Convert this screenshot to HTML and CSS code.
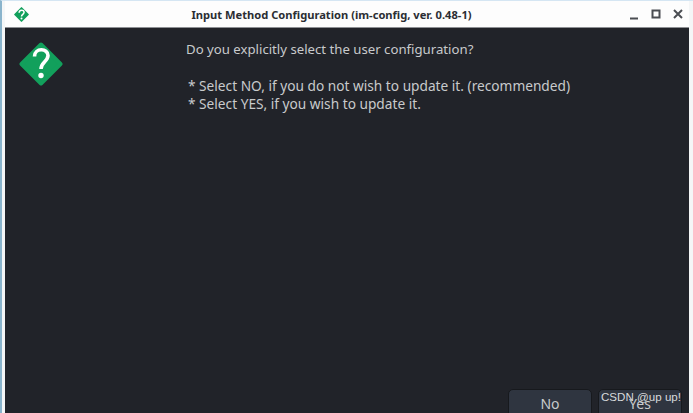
FILE: index.html

```html
<!DOCTYPE html>
<html lang="en">
<head>
  <meta charset="UTF-8">
  <meta name="viewport" content="width=device-width, initial-scale=1.0">
  <title>Input Method Configuration</title>
  <link rel="stylesheet" href="styles.css">
</head>
<body>
  <div class="window">
    <div class="titlebar">
      <svg class="title-icon" width="15" height="15" viewBox="0 0 44 44">
        <path d="M22 3 L41 22 L22 41 L3 22 Z" fill="#12a05c" stroke="#12a05c" stroke-width="5" stroke-linejoin="round"/>
        <path d="M15 17 C15 7 29.5 7.5 29.5 15.5 C29.5 21.5 22 21.5 22 28" fill="none" stroke="#fff" stroke-width="4.5"/>
        <circle cx="22" cy="34" r="3" fill="#fff"/>
      </svg>
      <div class="title">Input Method Configuration (im-config, ver. 0.48-1)</div>
      <div class="controls">
        <svg width="12" height="12" viewBox="0 0 12 12"><path d="M2 10.5 H10" stroke="#4a4d52" stroke-width="2"/></svg>
        <svg width="12" height="12" viewBox="0 0 12 12"><rect x="2.5" y="2.5" width="7" height="7" fill="none" stroke="#4a4d52" stroke-width="2"/></svg>
        <svg width="12" height="12" viewBox="0 0 12 12"><path d="M2 2 L10 10 M10 2 L2 10" stroke="#4a4d52" stroke-width="2"/></svg>
      </div>
    </div>
    <div class="dialog">
      <div class="content">
        <svg class="big-icon" width="44" height="44" viewBox="0 0 44 44">
          <path d="M22 2.5 L41.5 22 L22 41.5 L2.5 22 Z" fill="#12a05c" stroke="#12a05c" stroke-width="4" stroke-linejoin="round"/>
          <path d="M15.5 14.5 C15.5 5.5 29 6 29 13.5 C29 19.5 22 20 22 27" fill="none" stroke="#fff" stroke-width="3.6"/>
          <circle cx="22" cy="33.5" r="2.7" fill="#fff"/>
        </svg>
        <div class="message">
          <p class="question">Do you explicitly select the user configuration?</p>
          <p>* Select NO, if you do not wish to update it. (recommended)</p>
          <p>* Select YES, if you wish to update it.</p>
        </div>
      </div>
      <div class="buttons">
        <button class="btn">No</button>
        <button class="btn">Yes</button>
      </div>
    </div>
  </div>
  <div class="watermark">CSDN @up up!</div>
</body>
</html>
```

FILE: styles.css

```css
html, body {
  height: 100%;
}
body {
  margin: 0;
  overflow: hidden;
  background: #f4f6f7;
  font-family: "Noto Sans", sans-serif;
  position: relative;
}
.window {
  height: 100%;
  display: flex;
  flex-direction: column;
  padding: 0 4px 0 3px;
  box-sizing: border-box;
  border-top: 1px solid #d5e6f3;
  border-left: 2px solid #8ab4cc;
}
.titlebar {
  height: 26px;
  flex: none;
  display: flex;
  align-items: center;
  background: #fdfdfd;
  padding-left: 9px;
  padding-right: 5px;
}
.title-icon {
  flex: none;
}
.title {
  flex: 1;
  text-align: center;
  font-size: 11.15px;
  font-weight: 700;
  color: #2b2e33;
  padding-left: 6px;
}
.controls {
  display: flex;
  gap: 10px;
  align-items: center;
}
.dialog {
  flex: 1;
  display: flex;
  flex-direction: column;
  background: #212329;
  border-top: 1px solid #8e9094;
  min-height: 0;
}
.content {
  flex: 1;
  display: flex;
  padding: 12px 0 0 14px;
}
.big-icon {
  flex: none;
  margin-top: 2px;
}
.message {
  margin-left: 123px;
  color: #c8cacc;
  font-size: 13.7px;
  line-height: 18px;
}
.message p {
  margin: 0 0 0 2px;
}
.message .question {
  margin: 0 0 19px 0;
  font-size: 13.2px;
}
.buttons {
  display: flex;
  justify-content: flex-end;
  gap: 6px;
  padding-right: 7px;
  height: 24px;
}
.btn {
  width: 84px;
  height: 30px;
  background: #2f3540;
  border: 1px solid #17191d;
  border-radius: 5px;
  color: #c8cacc;
  font-family: "Noto Sans", sans-serif;
  font-size: 14px;
  padding: 0 0 1px;
}
.watermark {
  position: absolute;
  right: 12px;
  bottom: 9px;
  color: #d8dadc;
  font-family: "Liberation Sans", sans-serif;
  font-size: 11.6px;
  line-height: 14px;
}
```
